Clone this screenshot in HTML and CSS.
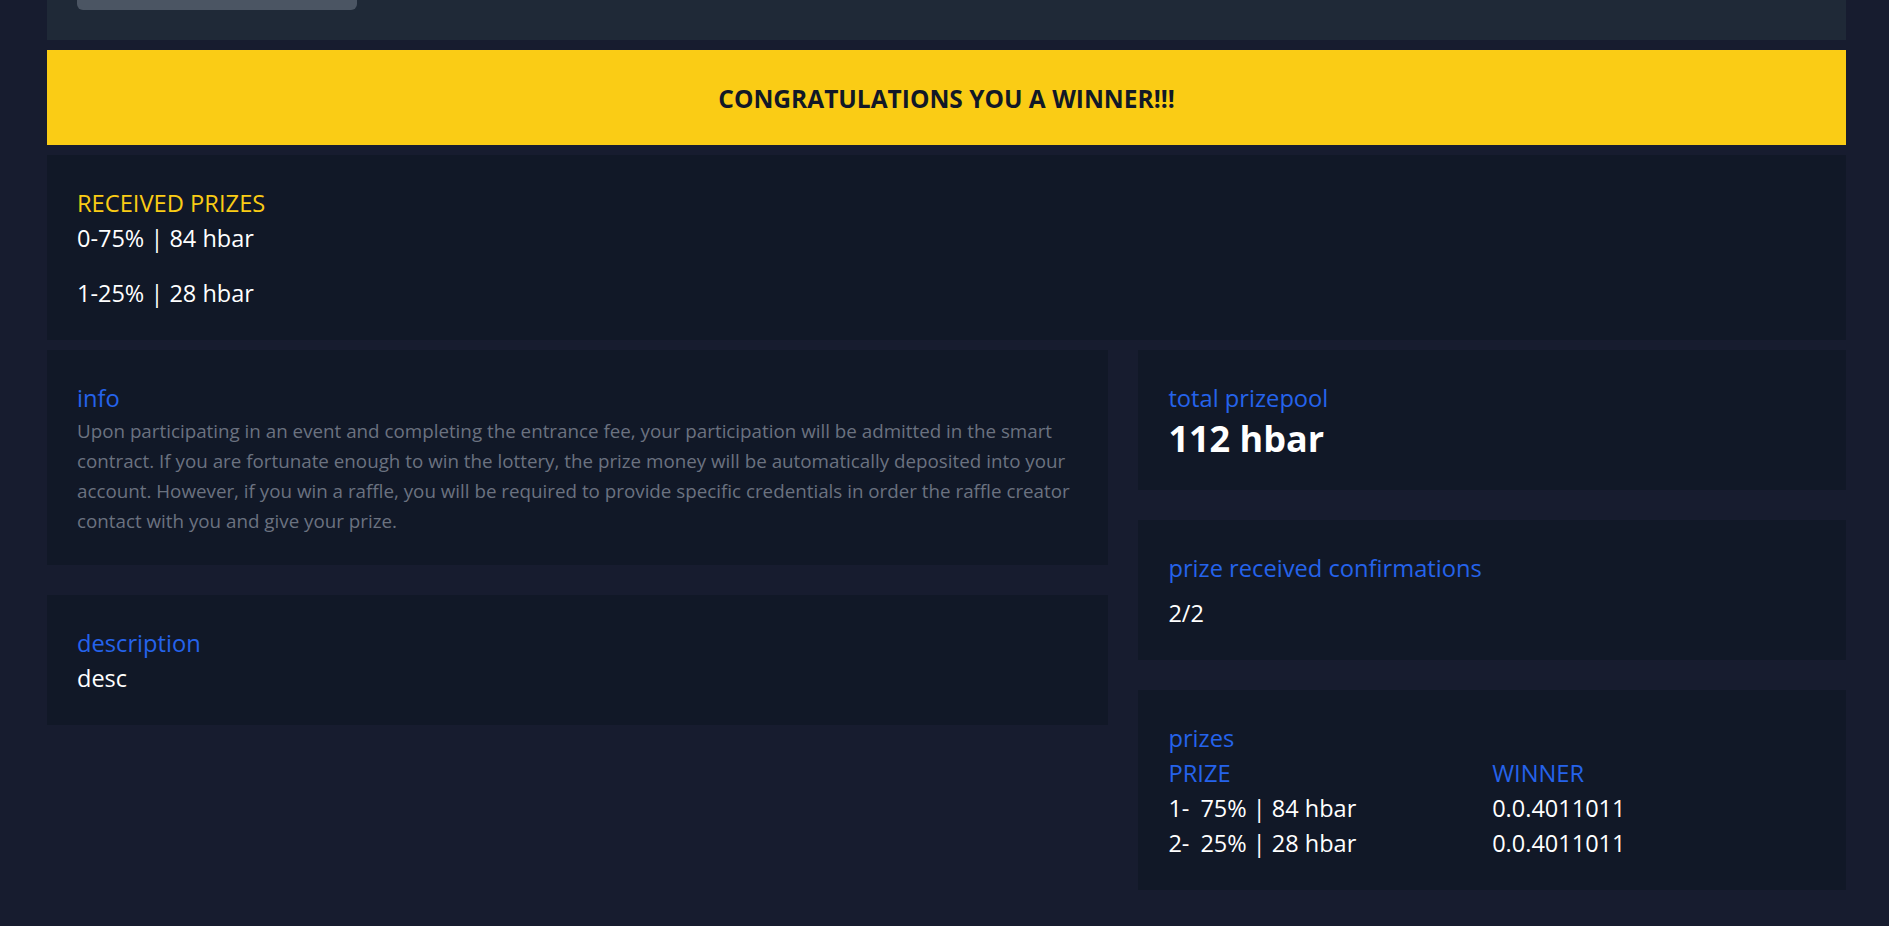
FILE: index.html
```html
<!DOCTYPE html>
<html lang="en">
<head>
<meta charset="utf-8">
<title>Raffle result</title>
<link rel="stylesheet" href="styles.css">
</head>
<body>
<div class="page">
  <div class="top-panel"><div class="top-btn"></div></div>
  <div class="banner">CONGRATULATIONS YOU A WINNER!!!</div>
  <div class="card">
    <div class="label label-yellow">RECEIVED PRIZES</div>
    <div class="prize-list">
      <div class="value">0-75% | 84 hbar</div>
      <div class="value">1-25% | 28 hbar</div>
    </div>
  </div>
  <div class="grid">
    <div class="col">
      <div class="card">
        <div class="label">info</div>
        <p class="info-text">Upon participating in an event and completing the entrance fee, your participation will be admitted in the smart contract. If you are fortunate enough to win the lottery, the prize money will be automatically deposited into your account. However, if you win a raffle, you will be required to provide specific credentials in order the raffle creator contact with you and give your prize.</p>
      </div>
      <div class="card">
        <div class="label">description</div>
        <div class="value">desc</div>
      </div>
    </div>
    <div class="col">
      <div class="card">
        <div class="label">total prizepool</div>
        <div class="big">112 hbar</div>
      </div>
      <div class="card">
        <div class="label">prize received confirmations</div>
        <div class="value value-spaced">2/2</div>
      </div>
      <div class="card">
        <div class="label">prizes</div>
        <div class="table">
          <div class="label">PRIZE</div>
          <div class="label">WINNER</div>
          <div class="value">1-<span class="pct">75% | 84 hbar</span></div>
          <div class="value">0.0.4011011</div>
          <div class="value">2-<span class="pct">25% | 28 hbar</span></div>
          <div class="value">0.0.4011011</div>
        </div>
      </div>
    </div>
  </div>
</div>
</body>
</html>
```

FILE: styles.css
```css
html, body {
  margin: 0;
  padding: 0;
  background: #171c2f;
}

body {
  font-family: "Open Sans", "Noto Sans", "Liberation Sans", sans-serif;
  color: #ffffff;
}

.page {
  margin: 0 43px 0 47px;
  padding-bottom: 36px;
  display: flex;
  flex-direction: column;
  gap: 10px;
}

.top-panel {
  background: #1f2937;
  height: 40px;
  padding: 0 30px;
}

.top-btn {
  width: 280px;
  height: 10px;
  background: #4b5563;
  border-radius: 0 0 6px 6px;
}

.banner {
  background: #facc15;
  color: #111827;
  text-align: center;
  font-weight: 700;
  font-size: 24.5px;
  line-height: 35px;
  padding: 31px 30px 29px;
}

.card {
  background: #111827;
  padding: 31px 30px 29px;
}

.label {
  color: #2563eb;
  font-size: 23.7px;
  line-height: 35px;
}

.label-yellow {
  color: #facc15;
}

.value {
  color: #ffffff;
  font-size: 23.5px;
  line-height: 35px;
}

.value-spaced {
  margin-top: 10px;
}

.prize-list {
  display: flex;
  flex-direction: column;
  gap: 20px;
}

.info-text {
  margin: 0;
  color: #6b7280;
  font-size: 18.8px;
  line-height: 30px;
}

.big {
  font-size: 36px;
  line-height: 45px;
  font-weight: 700;
  color: #ffffff;
}

.grid {
  display: grid;
  grid-template-columns: 3fr 2fr;
  gap: 30px;
  align-items: start;
}

.col {
  display: flex;
  flex-direction: column;
  gap: 30px;
}

.table {
  display: grid;
  grid-template-columns: 1fr 1fr;
}

.pct {
  margin-left: 11px;
}
```
